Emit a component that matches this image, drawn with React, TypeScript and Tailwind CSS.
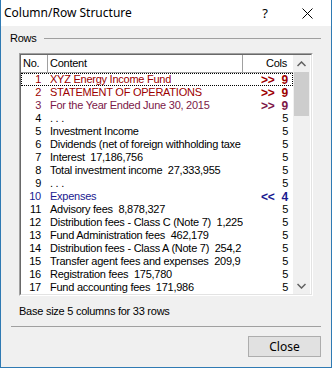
import React from "react";

interface Row {
  no: number;
  text: string;
  cols: number;
  mark?: ">>" | "<<";
  color?: string;
}

const rows: Row[] = [
  { no: 1, text: "XYZ Energy Income Fund", cols: 9, mark: ">>", color: "text-[#9c0000]" },
  { no: 2, text: "STATEMENT OF OPERATIONS", cols: 9, mark: ">>", color: "text-[#9c0000]" },
  { no: 3, text: "For the Year Ended June 30, 2015", cols: 9, mark: ">>", color: "text-[#7c1848]" },
  { no: 4, text: ". . .", cols: 5 },
  { no: 5, text: "Investment Income", cols: 5 },
  { no: 6, text: "Dividends (net of foreign withholding taxe", cols: 5 },
  { no: 7, text: "Interest  17,186,756", cols: 5 },
  { no: 8, text: "Total investment income  27,333,955", cols: 5 },
  { no: 9, text: ". . .", cols: 5 },
  { no: 10, text: "Expenses", cols: 4, mark: "<<", color: "text-[#1a1a90]" },
  { no: 11, text: "Advisory fees  8,878,327", cols: 5 },
  { no: 12, text: "Distribution fees - Class C (Note 7)  1,225", cols: 5 },
  { no: 13, text: "Fund Administration fees  462,179", cols: 5 },
  { no: 14, text: "Distribution fees - Class A (Note 7)  254,2", cols: 5 },
  { no: 15, text: "Transfer agent fees and expenses  209,9", cols: 5 },
  { no: 16, text: "Registration fees  175,780", cols: 5 },
  { no: 17, text: "Fund accounting fees  171,986", cols: 5 },
];

export default function App() {
  return (
    <div className="w-[332px] h-[368px] flex flex-col border-x border-b border-[#2f7ab3] bg-[#f0f0f0] text-black font-['Liberation_Sans',Arial,sans-serif] text-[11px] tracking-[-0.25px] overflow-hidden">
      {/* Title bar */}
      <div className="h-[26px] bg-white flex items-center shrink-0 tracking-normal">
        <span className="pl-[3px] text-[12px] font-['Noto_Sans',sans-serif] leading-none">
          Column/Row Structure
        </span>
        <span className="ml-auto mr-[34px] text-[13px] font-['Noto_Sans',sans-serif] leading-none">?</span>
        <svg className="mr-[18px]" width="11" height="11" viewBox="0 0 11 11">
          <path d="M0.5 0.5 L10.5 10.5 M10.5 0.5 L0.5 10.5" stroke="#000" strokeWidth="1" />
        </svg>
      </div>

      {/* Group header */}
      <div className="flex items-center pl-[9px] pr-[10px] mt-[5px] h-[14px]">
        <span className="leading-none">Rows</span>
        <div className="flex-1 ml-[7px] h-px bg-[#a0a0a0]" />
      </div>

      {/* List box */}
      <div className="ml-[18px] mt-[8px] w-[294px] border-t border-l border-[#a0a0a0] border-b border-r border-b-white border-r-white">
        <div className="flex border-t border-l border-[#696969] border-b border-r border-b-[#e3e3e3] border-r-[#e3e3e3] bg-white">
          <div className="w-[272px]">
            {/* Header */}
            <div className="flex h-[18px] border-b border-[#a0a0a0]">
              <div className="w-[27px] border-r border-[#a0a0a0] pl-[2px] flex items-center">No.</div>
              <div className="w-[195px] border-r border-[#a0a0a0] pl-[2px] flex items-center">Content</div>
              <div className="w-[50px] pr-[6px] flex items-center justify-end">Cols</div>
            </div>
            {/* Rows */}
            {rows.map((r) => (
              <div
                key={r.no}
                className={`flex h-[13px] items-center leading-none ${r.color ?? ""} ${
                  r.no === 1 ? "outline outline-1 outline-dotted outline-black -outline-offset-1" : ""
                }`}
              >
                <div className="w-[27px] pr-[7px] text-right">{r.no}</div>
                <div className="w-[195px] pl-[2px] whitespace-pre overflow-hidden">{r.text}</div>
                <div className="w-[50px] pr-[5px] flex justify-end items-center">
                  {r.mark && <span className="font-bold mr-[7px] text-[12px]">{r.mark}</span>}
                  <span className={r.mark ? "font-bold text-[12px]" : ""}>{r.cols}</span>
                </div>
              </div>
            ))}
          </div>
          {/* Scrollbar */}
          <div className="w-[17px] bg-[#f0f0f0] flex flex-col">
            <div className="h-[17px] flex items-center justify-center">
              <svg width="9" height="6" viewBox="0 0 9 6">
                <path d="M0.5 5 L4.5 1 L8.5 5" stroke="#606060" strokeWidth="1.5" fill="none" />
              </svg>
            </div>
            <div className="h-[44px] mx-[1px] bg-[#cdcdcd]" />
            <div className="flex-1" />
            <div className="h-[17px] flex items-center justify-center">
              <svg width="9" height="6" viewBox="0 0 9 6">
                <path d="M0.5 1 L4.5 5 L8.5 1" stroke="#606060" strokeWidth="1.5" fill="none" />
              </svg>
            </div>
          </div>
        </div>
      </div>

      {/* Status text */}
      <div className="pl-[18px] mt-[10px] leading-none">Base size 5 columns for 33 rows</div>

      {/* Separator */}
      <div className="mx-[10px] mt-[9px] h-px bg-[#a0a0a0]" />

      {/* Button */}
      <div className="flex justify-end pr-[10px] mt-[9px]">
        <button className="w-[73px] h-[21px] bg-[#e1e1e1] border border-[#adadad] text-[12px] tracking-normal font-['Noto_Sans',sans-serif] leading-none">
          Close
        </button>
      </div>
    </div>
  );
}
